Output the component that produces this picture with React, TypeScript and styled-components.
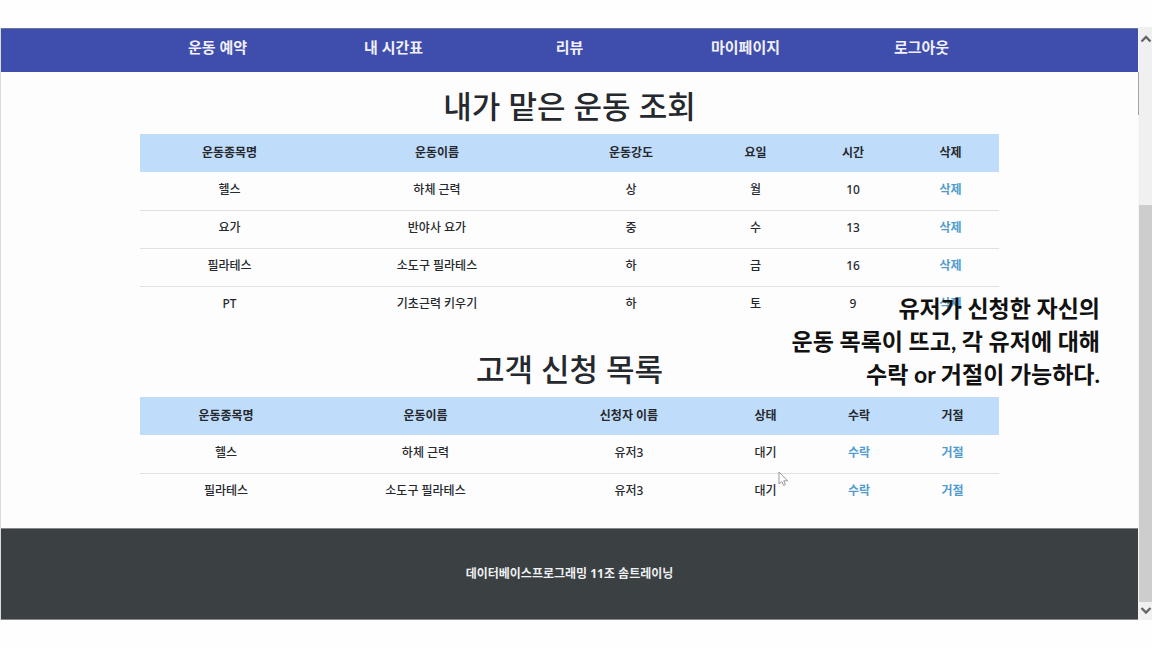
import React from "react";
import styled, { createGlobalStyle } from "styled-components";

const GlobalStyle = createGlobalStyle`
  * { box-sizing: border-box; }
  body {
    margin: 0;
    background: #fefefe;
    color: #25292d;
    font-family: "Noto Sans", "Noto Sans CJK KR", sans-serif;
    font-size: 12px;
    line-height: 20px;
  }
`;

const Stage = styled.div`
  position: relative;
  padding: 28px 0;
`;

const Browser = styled.div`
  display: flex;
`;

const Page = styled.div`
  flex: 1;
  min-width: 0;
  border-left: 1px solid #dcdcdc;
  background: #fdfdfd;
`;

const Nav = styled.nav`
  background: #3f4dac;
  border-top: 1px solid #6b749f;
`;

const NavList = styled.ul`
  display: flex;
  max-width: 880px;
  margin: 0 auto;
  padding: 6px 0 13px;
  list-style: none;
`;

const NavItem = styled.li`
  flex: 1;
  text-align: center;
`;

const NavLink = styled.a`
  color: #f0f1f8;
  font-size: 15px;
  line-height: 24px;
  font-weight: 700;
  text-decoration: none;
`;

const Main = styled.main`
  max-width: 859px;
  margin: 0 auto;
  padding: 14px 0 17px;
`;

const Section = styled.section`
  & + & {
    margin-top: 25px;
  }
`;

const Title = styled.h1`
  margin: 0;
  padding-bottom: 8px;
  text-align: center;
  font-size: 31px;
  line-height: 40px;
  font-weight: 500;
`;

const Table = styled.table`
  width: 100%;
  table-layout: fixed;
  border-collapse: collapse;
  text-align: center;
`;

const Col = styled.col<{ $width: number }>`
  width: ${(p) => p.$width}px;
`;

const HeadCell = styled.th`
  height: 38px;
  padding: 0;
  background: #c0dcfb;
  font-weight: 700;
`;

const Row = styled.tr`
  & + & td {
    border-top: 1px solid #e0e1e2;
  }
`;

const Cell = styled.td`
  height: 38px;
  padding: 0 0 2px;
  font-weight: 500;
`;

const ActionLink = styled.a`
  color: #519ccf;
  font-weight: 700;
  text-decoration: none;
`;

const Footer = styled.footer`
  padding: 35px 0;
  border-top: 1px solid #85888a;
  border-bottom: 1px solid #85888a;
  background: #3b4043;
  color: #eef0f1;
  text-align: center;
  font-weight: 700;
`;

const ScrollTrack = styled.div`
  position: relative;
  display: flex;
  flex-direction: column;
  width: 14px;
  margin-top: -1px;
  border-left: 1px solid #f6f6f6;
  background: #f0f0f0;

  &::before {
    content: "";
    position: absolute;
    top: 45px;
    left: -1px;
    width: 1px;
    height: 43px;
    background: #a4a4a4;
  }
`;

const ScrollButton = styled.button<{ $height: number }>`
  display: flex;
  align-items: center;
  justify-content: center;
  height: ${(p) => p.$height}px;
  padding: 0;
  border: 0;
  background: transparent;
  color: #666;
`;

const ScrollSpace = styled.div`
  flex: 154;
`;

const ScrollThumb = styled.div`
  flex: 397;
  background: #cdcdcd;
`;

const Caption = styled.p`
  position: absolute;
  top: 292px;
  right: 52px;
  margin: 0;
  color: #111;
  text-align: right;
  font-family: Lato, "Noto Sans CJK KR", sans-serif;
  font-size: 23px;
  line-height: 33px;
  font-weight: 700;
`;

const Pointer = styled.svg`
  position: absolute;
  top: 471px;
  left: 778px;
`;

type TableData = {
  title: string;
  widths: number[];
  heads: string[];
  rows: string[][];
  actions: string[];
};

const tables: TableData[] = [
  {
    title: "내가 맡은 운동 조회",
    widths: [179, 236, 152, 97, 98, 97],
    heads: ["운동종목명", "운동이름", "운동강도", "요일", "시간", "삭제"],
    rows: [
      ["헬스", "하체 근력", "상", "월", "10"],
      ["요가", "반야사 요가", "중", "수", "13"],
      ["필라테스", "소도구 필라테스", "하", "금", "16"],
      ["PT", "기초근력 키우기", "하", "토", "9"],
    ],
    actions: ["삭제"],
  },
  {
    title: "고객 신청 목록",
    widths: [172, 227, 180, 93, 94, 93],
    heads: ["운동종목명", "운동이름", "신청자 이름", "상태", "수락", "거절"],
    rows: [
      ["헬스", "하체 근력", "유저3", "대기"],
      ["필라테스", "소도구 필라테스", "유저3", "대기"],
    ],
    actions: ["수락", "거절"],
  },
];

const menu = ["운동 예약", "내 시간표", "리뷰", "마이페이지", "로그아웃"];

function DataTable({ title, widths, heads, rows, actions }: TableData) {
  return (
    <Section>
      <Title>{title}</Title>
      <Table aria-label={title}>
        <colgroup>
          {widths.map((w, i) => (
            <Col key={i} $width={w} />
          ))}
        </colgroup>
        <thead>
          <tr>
            {heads.map((h) => (
              <HeadCell key={h} scope="col">{h}</HeadCell>
            ))}
          </tr>
        </thead>
        <tbody>
          {rows.map((row) => (
            <Row key={row[0]}>
              {row.map((value, i) => (
                <Cell key={i}>{value}</Cell>
              ))}
              {actions.map((a) => (
                <Cell key={a}>
                  <ActionLink href="#">{a}</ActionLink>
                </Cell>
              ))}
            </Row>
          ))}
        </tbody>
      </Table>
    </Section>
  );
}

function Chevron({ down = false }: { down?: boolean }) {
  return (
    <svg width="12" height="10" viewBox="0 0 12 10" fill="none" stroke="currentColor" strokeWidth="2.4">
      <path d={down ? "M1.5 2L6 6.5L10.5 2" : "M1.5 7.5L6 3L10.5 7.5"} />
    </svg>
  );
}

export default function App() {
  return (
    <Stage>
      <GlobalStyle />
      <Browser>
        <Page>
          <Nav>
            <NavList>
              {menu.map((m) => (
                <NavItem key={m}>
                  <NavLink href="#">{m}</NavLink>
                </NavItem>
              ))}
            </NavList>
          </Nav>
          <Main>
            {tables.map((t) => (
              <DataTable key={t.title} {...t} />
            ))}
          </Main>
          <Footer>데이터베이스프로그래밍 11조 솜트레이닝</Footer>
        </Page>
        <ScrollTrack>
          <ScrollButton $height={24} aria-label="위로">
            <Chevron />
          </ScrollButton>
          <ScrollSpace />
          <ScrollThumb />
          <ScrollButton $height={18} aria-label="아래로">
            <Chevron down />
          </ScrollButton>
        </ScrollTrack>
      </Browser>
      <Caption>
        유저가 신청한 자신의
        <br />
        운동 목록이 뜨고, 각 유저에 대해
        <br />
        수락 or 거절이 가능하다.
      </Caption>
      <Pointer width="11" height="16" viewBox="0 0 11 16" aria-hidden="true">
        <path
          d="M1 1V13L3.8 10.6L5.6 14.4L7.4 13.6L5.8 9.8H9.6Z"
          fill="#fff"
          stroke="#999"
          strokeWidth="1"
        />
      </Pointer>
    </Stage>
  );
}
